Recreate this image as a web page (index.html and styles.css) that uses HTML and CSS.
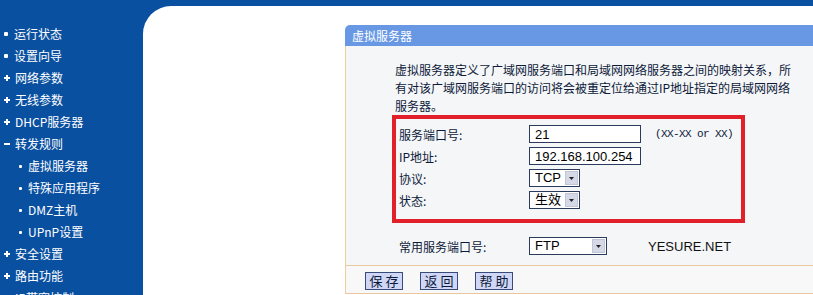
FILE: index.html
```html
<!DOCTYPE html>
<html lang="zh-CN">
<head>
<meta charset="utf-8">
<title>虚拟服务器</title>
<link rel="stylesheet" href="styles.css">
</head>
<body>
<div class="page">
  <nav class="sidebar">
    <ul class="menu">
      <li class="item dot">运行状态</li>
      <li class="item dot">设置向导</li>
      <li class="item plus">网络参数</li>
      <li class="item plus">无线参数</li>
      <li class="item plus">DHCP服务器</li>
      <li class="item minus">转发规则</li>
      <li class="item sub dot">虚拟服务器</li>
      <li class="item sub dot">特殊应用程序</li>
      <li class="item sub dot">DMZ主机</li>
      <li class="item sub dot">UPnP设置</li>
      <li class="item plus">安全设置</li>
      <li class="item plus">路由功能</li>
      <li class="item plus">IP带宽控制</li>
    </ul>
  </nav>
  <main class="content">
    <section class="panel">
      <h1 class="panel-title">虚拟服务器</h1>
      <div class="panel-body">
        <p class="desc">虚拟服务器定义了广域网服务端口和局域网网络服务器之间的映射关系，所有对该广域网服务端口的访问将会被重定位给通过IP地址指定的局域网网络服务器。</p>
        <div class="highlight">
          <div class="row">
            <span class="label">服务端口号:</span>
            <input class="field" type="text" value="21">
            <span class="hint">(XX-XX or XX)</span>
          </div>
          <div class="row">
            <span class="label">IP地址:</span>
            <input class="field" type="text" value="192.168.100.254">
          </div>
          <div class="row">
            <span class="label">协议:</span>
            <span class="select select-sm">
              <select class="select-input"><option>TCP</option></select>
              <span class="select-arrow"><svg width="11" height="12" viewBox="0 0 11 12"><polygon points="3,5 8,5 5.5,8" fill="#222"/></svg></span>
            </span>
          </div>
          <div class="row">
            <span class="label">状态:</span>
            <span class="select select-sm">
              <select class="select-input"><option>生效</option></select>
              <span class="select-arrow"><svg width="11" height="12" viewBox="0 0 11 12"><polygon points="3,5 8,5 5.5,8" fill="#222"/></svg></span>
            </span>
          </div>
        </div>
        <div class="row common">
          <span class="label">常用服务端口号:</span>
          <span class="select select-lg">
            <select class="select-input"><option>FTP</option></select>
            <span class="select-arrow"><svg width="11" height="12" viewBox="0 0 11 12"><polygon points="3,5 8,5 5.5,8" fill="#222"/></svg></span>
          </span>
          <span class="brand">YESURE.NET</span>
        </div>
      </div>
      <div class="actions">
        <button class="btn" type="button">保存</button>
        <button class="btn" type="button">返回</button>
        <button class="btn" type="button">帮助</button>
      </div>
    </section>
  </main>
</div>
</body>
</html>
```

FILE: styles.css
```css
html, body {
  margin: 0;
  height: 100%;
  overflow: hidden;
}

body {
  background: #0a50a0;
  font-family: "Noto Sans CJK SC", "Liberation Sans", sans-serif;
  font-size: 12px;
  color: #0d1a3a;
}

.page {
  display: grid;
  grid-template-columns: 143px 1fr;
  height: 295px;
  overflow: hidden;
}

/* Sidebar */
.sidebar {
  padding-top: 23px;
}

.menu {
  list-style: none;
  margin: 0;
  padding: 0;
}

.item {
  display: flex;
  align-items: center;
  height: 22px;
  line-height: 22px;
  color: #fff;
  font-size: 12px;
  white-space: nowrap;
}

.item::before {
  content: "";
  flex: none;
}

.dot::before {
  width: 4px;
  height: 4px;
  margin: 0 6px 0 4px;
  background: #fff;
  border-radius: 1px;
}

.sub.dot::before {
  width: 3px;
  height: 3px;
  margin: 0 6px 0 19px;
}

.plus::before {
  width: 6px;
  height: 6px;
  margin: 0 5px 0 4px;
  background:
    linear-gradient(#fff, #fff) center / 6px 2px no-repeat,
    linear-gradient(#fff, #fff) center / 2px 6px no-repeat;
}

.minus::before {
  width: 6px;
  height: 2px;
  margin: 0 5px 0 4px;
  background: #fff;
}

/* Content */
.content {
  margin-top: 6px;
  background: #fff;
  border-top-left-radius: 28px;
  overflow: hidden;
  padding: 19px 0 0 202px;
}

.panel {
  width: 480px;
}

.panel-title {
  margin: 0;
  height: 21px;
  line-height: 21px;
  padding-left: 7px;
  background: #6898e4;
  color: #fff;
  font-size: 12px;
  font-weight: normal;
  border-top-left-radius: 5px;
}

.panel-body {
  background: #f5f6f8;
  border-left: 1px solid #f0cd9c;
  padding: 15px 0 8px 0;
}

.desc {
  margin: 0 0 0 49px;
  width: 398px;
  line-height: 18px;
  font-size: 12px;
}

.highlight {
  box-sizing: border-box;
  width: 353px;
  margin-left: 46px;
  border: 4px solid #e1202a;
  padding: 4px 0 8px 3px;
}

.row {
  display: flex;
  align-items: center;
  height: 22px;
}

.label {
  flex: none;
  width: 130px;
  font-size: 12px;
}

.field {
  box-sizing: border-box;
  width: 112px;
  height: 18px;
  margin: 0;
  padding: 0 5px;
  border: 1px solid #2b3b5b;
  background: #fff;
  font: 13px "Liberation Sans", sans-serif;
  color: #000;
  outline: none;
}

.hint {
  margin-left: 14px;
  font: 11px "Liberation Mono", monospace;
  letter-spacing: -0.6px;
}

.select {
  position: relative;
  display: inline-flex;
  box-sizing: border-box;
  height: 18px;
  border: 1px solid #2b3b5b;
  background: #fff;
}

.select-sm {
  width: 51px;
}

.select-lg {
  width: 78px;
}

.select-input {
  -webkit-appearance: none;
  appearance: none;
  width: 100%;
  height: 16px;
  margin: 0;
  padding: 0 0 0 5px;
  border: 0;
  background: transparent;
  font: 13px "Liberation Sans", "Noto Sans CJK SC", sans-serif;
  line-height: 16px;
  color: #000;
  outline: none;
}

.select-arrow {
  position: absolute;
  top: 1px;
  right: 1px;
  box-sizing: border-box;
  width: 13px;
  height: 14px;
  background: #d5d9e7;
  border: 1px solid #c2c6d4;
  display: flex;
}

.common {
  margin: 12px 0 0 53px;
}

.brand {
  margin-left: 41px;
  font: 13px "Liberation Sans", sans-serif;
  color: #111;
}

/* Actions */
.actions {
  display: flex;
  gap: 17px;
  background: #f8f8f8;
  border-top: 1px solid #e9c79f;
  border-bottom: 1px solid #e9c79f;
  border-left: 1px solid #f0cd9c;
  padding: 6px 0 3px 19px;
}

.btn {
  box-sizing: border-box;
  width: 38px;
  height: 18px;
  margin: 0;
  padding: 0 0 0 3px;
  border: 1px solid #3a4a7a;
  background: #cfd6f6;
  font: 13px "Noto Sans CJK SC", sans-serif;
  line-height: 16px;
  letter-spacing: 3px;
  color: #0d1a3a;
}
```
